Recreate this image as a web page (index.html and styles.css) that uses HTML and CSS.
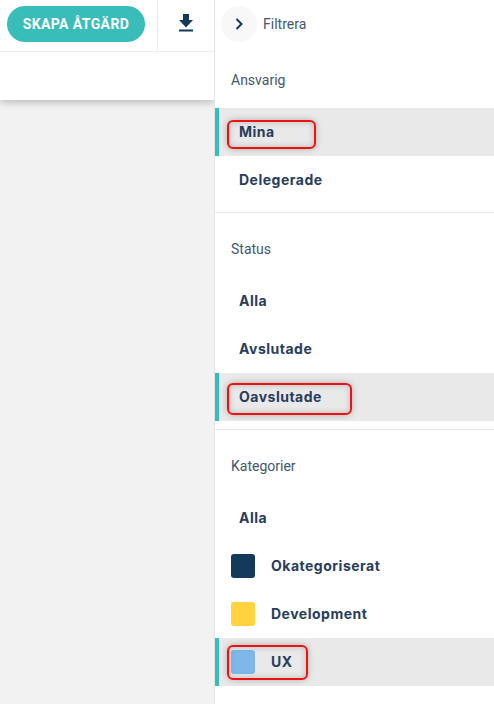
FILE: index.html
```html
<!DOCTYPE html>
<html lang="sv">
<head>
  <meta charset="UTF-8" />
  <meta name="viewport" content="width=device-width, initial-scale=1" />
  <title>Åtgärder</title>
  <link rel="stylesheet" href="styles.css">
</head>
<body>
  <div class="page">
    <main class="content">
      <div class="panel">
        <div class="toolbar">
          <button class="createBtn">SKAPA ÅTGÄRD</button>
          <div class="exportBox">
            <svg width="16" height="20" viewBox="0 0 16 20">
              <path d="M5 0h6v6h4l-7 7.5L1 6h4z" fill="#15395b"/>
              <rect x="1" y="15.5" width="14" height="2" fill="#15395b"/>
            </svg>
          </div>
        </div>
      </div>
    </main>

    <aside class="filters">
      <div class="filterHead">
        <span class="circleBtn">
          <svg width="10" height="14" viewBox="0 0 10 14">
            <path d="M2.5 2l5 5-5 5" fill="none" stroke="#15395b" stroke-width="2"/>
          </svg>
        </span>
        <span class="filterTitle">Filtrera</span>
      </div>

      <section class="group">
        <h3>Ansvarig</h3>
        <div class="row active"><span class="rowText">Mina</span><span class="mark markMina"></span></div>
        <div class="row"><span class="rowText">Delegerade</span></div>
      </section>

      <section class="group">
        <h3>Status</h3>
        <div class="row"><span class="rowText">Alla</span></div>
        <div class="row"><span class="rowText">Avslutade</span></div>
        <div class="row active"><span class="rowText">Oavslutade</span><span class="mark markOpen"></span></div>
      </section>

      <section class="group last">
        <h3>Kategorier</h3>
        <div class="row"><span class="rowText">Alla</span></div>
        <div class="row cat"><span class="swatch navy"></span><span class="rowText">Okategoriserat</span></div>
        <div class="row cat"><span class="swatch yellow"></span><span class="rowText">Development</span></div>
        <div class="row cat active"><span class="swatch blue"></span><span class="rowText">UX</span><span class="mark markUx"></span></div>
      </section>
    </aside>
  </div>
</body>
</html>
```

FILE: styles.css
```css
* {
  box-sizing: border-box;
}
html, body {
  height: 100%;
}
body {
  margin: 0;
  font-family: Roboto, Arial, sans-serif;
  color: #2c3e5a;
  overflow: hidden;
}
.page {
  display: flex;
  height: 704px;
}
.content {
  width: 214px;
  background: #f2f2f2;
  overflow: hidden;
}
.panel {
  height: 100px;
  background: white;
  box-shadow: 0 2px 8px rgba(0,0,0,0.25);
}
.toolbar {
  height: 52px;
  display: flex;
  align-items: center;
  border-bottom: 1px solid #eeeeee;
  padding-left: 7px;
}
.createBtn {
  width: 138px;
  height: 36px;
  margin-bottom: 3px;
  background: #38bdb9;
  border: none;
  border-radius: 18px;
  color: white;
  font-family: Roboto, Arial, sans-serif;
  font-size: 14px;
  font-weight: 700;
  letter-spacing: 0.4px;
  padding: 0;
}
.exportBox {
  width: 57px;
  height: 51px;
  margin-left: 12px;
  border-left: 1px solid #eeeeee;
  display: flex;
  align-items: center;
  justify-content: center;
  padding-bottom: 4px;
}
.filters {
  width: 280px;
  background: white;
  border-left: 1px solid #e4e4e4;
}
.filterHead {
  height: 44px;
  padding: 4px 0 0 6px;
  display: flex;
  align-items: center;
  gap: 6px;
}
.circleBtn {
  width: 36px;
  height: 36px;
  flex: none;
  border-radius: 50%;
  background: #f8f8f8;
  display: flex;
  align-items: center;
  justify-content: center;
}
.filterTitle {
  font-size: 14px;
  color: #46566c;
}
.group {
  padding: 8px 0;
  border-bottom: 1px solid #e8e8e8;
}
.group.last {
  border-bottom: none;
}
.group h3 {
  margin: 0;
  height: 56px;
  line-height: 56px;
  padding-left: 16px;
  font-size: 14px;
  font-weight: 400;
  color: #46566c;
}
.row {
  position: relative;
  height: 48px;
  display: flex;
  align-items: center;
  padding-left: 24px;
  font-family: Inter, Arial, sans-serif;
  font-size: 14px;
  font-weight: 700;
  letter-spacing: 0.5px;
  color: #283c5c;
}
.rowText {
  margin-bottom: 2px;
}
.row.cat {
  padding-left: 16px;
}
.row.active {
  background: #e9e9e9;
  border-left: 4px solid #38bdb9;
  padding-left: 20px;
}
.row.cat.active {
  padding-left: 12px;
}
.swatch {
  width: 24px;
  height: 24px;
  margin-right: 16px;
  border-radius: 3px;
}
.navy {
  background: #15395b;
}
.yellow {
  background: #ffd23f;
}
.blue {
  background: #7db8e8;
}
/* red annotation boxes drawn on top of the screenshot */
.mark {
  position: absolute;
  left: 8px;
  border: 2px solid #f01010;
  border-radius: 6px;
  box-shadow: 0 0 6px rgba(0,0,0,0.25), inset 0 0 6px rgba(0,0,0,0.2);
}
.markMina {
  top: 12px;
  width: 89px;
  height: 29px;
}
.markOpen {
  top: 10px;
  width: 125px;
  height: 32px;
}
.markUx {
  top: 7px;
  width: 81px;
  height: 35px;
}
```
